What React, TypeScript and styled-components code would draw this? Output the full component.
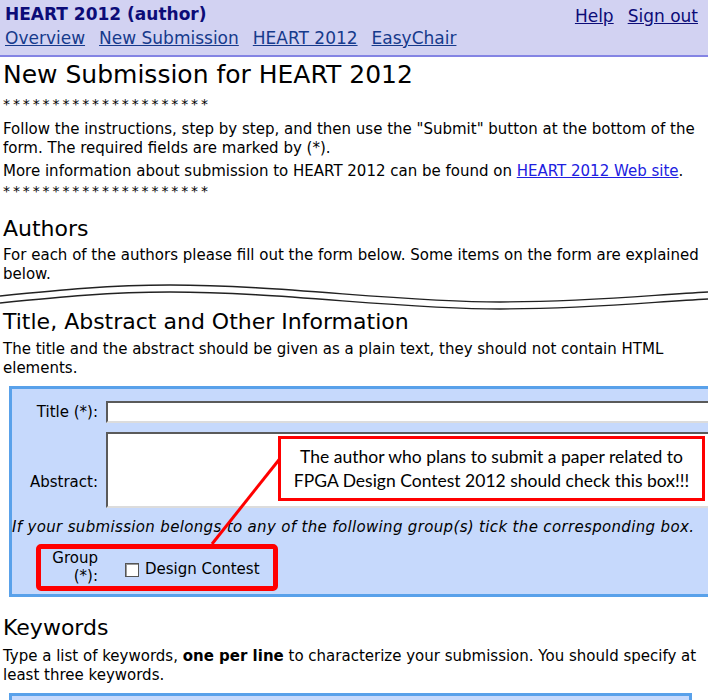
import React from 'react';
import styled, { createGlobalStyle } from 'styled-components';

const GlobalStyle = createGlobalStyle`
  html, body {
    margin: 0;
    padding: 0;
    background: #fff;
    overflow-x: hidden;
  }
  body {
    font-family: "DejaVu Sans", Verdana, sans-serif;
    font-size: 15px;
    line-height: 19px;
    color: #000;
  }
`;

const navLinks = ['Overview', 'New Submission', 'HEART 2012', 'EasyChair'];

const App = () => {
  return (
    <>
      <GlobalStyle />
      <Header>
        <TopRow>
          <Brand>HEART 2012 (author)</Brand>
          <UserLinks>
            <HeadLink href="#">Help</HeadLink>
            <HeadLink href="#">Sign out</HeadLink>
          </UserLinks>
        </TopRow>
        <NavRow>
          {navLinks.map((l) => (
            <NavLink key={l} href="#">
              {l}
            </NavLink>
          ))}
        </NavRow>
      </Header>

      <Main>
        <PageTitle>New Submission for HEART 2012</PageTitle>
        <Stars>*********************</Stars>
        <Text $top={6}>
          Follow the instructions, step by step, and then use the "Submit" button at the bottom of the
          form. The required fields are marked by (*).
        </Text>
        <Text $top={4}>
          More information about submission to HEART 2012 can be found on{' '}
          <SiteLink href="#">HEART 2012 Web site</SiteLink>.
        </Text>
        <Stars $top={1}>*********************</Stars>

        <Section $top={14}>Authors</Section>
        <Text $top={3}>
          For each of the authors please fill out the form below. Some items on the form are explained
          below.
        </Text>

        <Break viewBox="0 0 708 22" preserveAspectRatio="none">
          <path d="M0 12 C 60 6, 110 1, 170 1 C 280 1, 400 18, 500 18 C 590 18, 650 11, 708 8" />
          <path d="M0 19 C 60 13, 110 8, 170 8 C 280 8, 400 25, 500 25 C 590 25, 650 18, 708 15" />
        </Break>

        <Section $top={2}>Title, Abstract and Other Information</Section>
        <Text $top={4}>
          The title and the abstract should be given as a plain text, they should not contain HTML
          elements.
        </Text>

        <FormBox>
          <FieldGrid>
            <Label>Title (*):</Label>
            <TextInput />
            <Label $pad={41}>Abstract:</Label>
            <TextArea />
          </FieldGrid>
          <Hint>If your submission belongs to any of the following group(s) tick the corresponding box.</Hint>
          <FieldGrid $top={10}>
            <Label $lh={18}>
              Group
              <br />
              (*):
            </Label>
            <CheckRow>
              <Check />
              Design Contest
            </CheckRow>
          </FieldGrid>

          <Connector width="80" height="100" viewBox="0 0 80 100">
            <line x1="72" y1="2" x2="2" y2="90" />
          </Connector>
          <Callout>
            The author who plans to submit a paper related to
            <br />
            FPGA Design Contest 2012 should check this box!!!
          </Callout>
          <GroupMark />
        </FormBox>

        <Section $top={17}>Keywords</Section>
        <Text $top={5}>
          Type a list of keywords, <b>one per line</b> to characterize your submission. You should specify at
          least three keywords.
        </Text>
        <NextBox />
      </Main>
    </>
  );
};

export default App;

const Header = styled.header`
  background: #d2d2f2;
  border-bottom: 2px solid #8484e4;
  padding: 2px 10px 4px 5px;
  height: 49px;
`;

const TopRow = styled.div`
  display: flex;
  justify-content: space-between;
  align-items: center;
  height: 24px;
`;

const Brand = styled.div`
  font-size: 17px;
  font-weight: bold;
  color: #0c0c78;
`;

const UserLinks = styled.div`
  display: flex;
  gap: 14px;
  padding-top: 4px;
`;

const HeadLink = styled.a`
  font-size: 17px;
  color: #0c0c78;
  text-decoration: underline;
`;

const NavRow = styled.nav`
  display: flex;
  gap: 14px;
  margin-top: 3px;
`;

const NavLink = styled.a`
  font-size: 17px;
  color: #163a8c;
  text-decoration: underline;
`;

const Main = styled.main`
  padding: 0 0 0 3px;
`;

const PageTitle = styled.h1`
  margin: 3px 0 0;
  font-size: 25px;
  line-height: 30px;
  font-weight: normal;
`;

const Stars = styled.div<{ $top?: number }>`
  margin-top: ${(p) => p.$top ?? 5}px;
  font-size: 14px;
  letter-spacing: 2.9px;
  line-height: 19px;
`;

const Text = styled.p<{ $top?: number }>`
  margin: ${(p) => p.$top ?? 0}px 0 0;
  padding-right: 4px;
`;

const SiteLink = styled.a`
  color: #2020e0;
  text-decoration: underline;
`;

const Section = styled.h2<{ $top?: number }>`
  margin: ${(p) => p.$top ?? 0}px 0 0;
  font-size: 22px;
  line-height: 28px;
  font-weight: normal;
`;

const Break = styled.svg`
  display: block;
  width: 708px;
  height: 22px;
  margin: 0 0 0 -3px;
  overflow: visible;
  path {
    fill: none;
    stroke: #222;
    stroke-width: 1.3;
  }
`;

const FormBox = styled.div`
  position: relative;
  margin: 8px 0 0 6px;
  width: 760px;
  height: 205px;
  background: #c6d9fc;
  border: 3px solid #59a1ea;
  box-sizing: content-box;
`;

const FieldGrid = styled.div<{ $top?: number }>`
  display: grid;
  grid-template-columns: 86px 1fr;
  column-gap: 8px;
  row-gap: 9px;
  margin-top: ${(p) => p.$top ?? 12}px;
`;

const Label = styled.div<{ $pad?: number; $lh?: number }>`
  text-align: right;
  padding-top: ${(p) => p.$pad ?? 2}px;
  line-height: ${(p) => p.$lh ?? 19}px;
`;

const TextInput = styled.div`
  height: 18px;
  background: #fff;
  border: 2px solid;
  border-color: #5a5a5a #dcdcdc #dcdcdc #5a5a5a;
`;

const TextArea = styled.div`
  height: 72px;
  background: #fff;
  border: 2px solid;
  border-color: #5a5a5a #dcdcdc #dcdcdc #5a5a5a;
`;

const Hint = styled.div`
  margin-top: 10px;
  font-style: italic;
  letter-spacing: 0.34px;
  white-space: nowrap;
`;

const CheckRow = styled.div`
  display: flex;
  align-items: center;
  gap: 6px;
  padding: 13px 0 0 19px;
  height: 19px;
`;

const Check = styled.span`
  display: inline-block;
  width: 12px;
  height: 12px;
  background: #fff;
  border: 1px solid #555;
  box-shadow: inset 1px 1px 0 #999;
`;

const Callout = styled.div`
  position: absolute;
  left: 266px;
  top: 47px;
  width: 421px;
  height: 59px;
  border: 3px solid #f00;
  background: #fff;
  font-family: Lato, "Open Sans", sans-serif;
  font-size: 17.5px;
  line-height: 24px;
  display: flex;
  align-items: center;
  justify-content: center;
  text-align: center;
`;

const Connector = styled.svg`
  position: absolute;
  left: 198px;
  top: 65px;
  overflow: visible;
  line {
    stroke: #f00;
    stroke-width: 3;
  }
`;

const GroupMark = styled.div`
  position: absolute;
  left: 24px;
  top: 155px;
  width: 232px;
  height: 37px;
  border: 5px solid #f00;
  border-radius: 5px;
`;

const NextBox = styled.div`
  margin: 8px 0 0 6px;
  width: 677px;
  height: 40px;
  background: #c6d9fc;
  border: 3px solid #59a1ea;
`;
